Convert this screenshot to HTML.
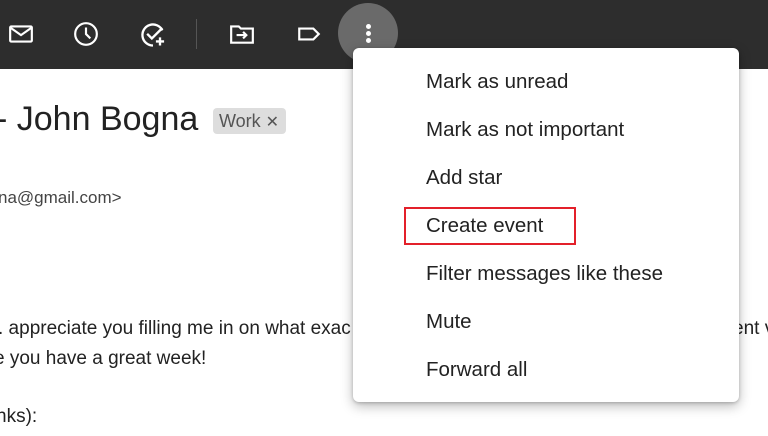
<!DOCTYPE html>
<html><head><meta charset="utf-8"><style>
*{margin:0;padding:0;box-sizing:border-box}
body{width:768px;height:436px;overflow:hidden;background:#fff;font-family:"Liberation Sans",Arial,sans-serif;position:relative;color:#222}
.bar{position:absolute;left:0;top:0;width:768px;height:69px;background:#2d2d2d}
.ic{position:absolute;top:21px}
.div{position:absolute;left:196px;top:19px;width:1px;height:30px;background:#555}
.more{position:absolute;left:338px;top:3px;width:60px;height:60px;border-radius:50%;background:#6a6a6a}
.dot{position:absolute;left:28px;width:5px;height:5px;border-radius:50%;background:#fff}
.t{position:absolute;white-space:nowrap}
.menu{position:absolute;left:353px;top:48px;width:386px;height:354px;background:#fff;border-radius:6px;box-shadow:0 4px 12px rgba(0,0,0,.28),0 1px 3px rgba(0,0,0,.2)}
.mi{position:absolute;left:73px;font-size:20.5px;color:#222;white-space:nowrap;line-height:24px}
.red{position:absolute;left:404px;top:207px;width:172px;height:38px;border:2px solid #e3202a}
</style></head><body>
<div class="bar">
<svg class="ic" style="left:8px" width="26" height="26" viewBox="0 0 24 24" fill="none" stroke="#fff" stroke-width="2"><rect x="2" y="5" width="20" height="14" rx="1"/><path d="M2 6l10 7 10-7"/></svg>
<svg class="ic" style="left:73px" width="26" height="26" viewBox="0 0 24 24" fill="none" stroke="#fff" stroke-width="2"><circle cx="12" cy="12" r="10"/><path d="M12 6v6l4 4"/></svg>
<svg class="ic" style="left:139px" width="28" height="28" viewBox="0 0 24 24" fill="none" stroke="#fff" stroke-width="2"><path d="M20 8A9 9 0 1 0 12 21"/><path d="M7 11l4 4 9-9"/><path d="M18 14v7M14.5 17.5h7"/></svg>
<div class="div"></div>
<svg class="ic" style="left:229px" width="26" height="26" viewBox="0 0 24 24" fill="none" stroke="#fff" stroke-width="2"><path d="M2 5h7l2 2h11v13H2z"/><path d="M7 13h9M13 10l3 3-3 3"/></svg>
<svg class="ic" style="left:296px" width="26" height="26" viewBox="0 0 24 24" fill="none" stroke="#fff" stroke-width="2"><path d="M3 7h13l5 5-5 5H3z"/></svg>
<div class="more"><div class="dot" style="top:21px"></div><div class="dot" style="top:28px"></div><div class="dot" style="top:35px"></div></div>
</div>
<div class="t" style="left:-4px;top:100px;font-size:34px;color:#222">- John Bogna</div>
<div class="t" style="left:213px;top:108px;height:26px;width:73px;background:#ddd;border-radius:4px;font-size:18px;color:#555;padding:3px 0 0 6px">Work <span style="font-size:16px">✕</span></div>
<div class="t" style="left:-2px;top:188px;font-size:17px;color:#444">na@gmail.com&gt;</div>
<div class="t" style="left:-2px;top:318px;font-size:19px">. appreciate you filling me in on what exac</div>
<div class="t" style="left:-6px;top:348px;font-size:19px">e you have a great week!</div>
<div class="t" style="left:-4px;top:406px;font-size:19px">nks):</div>
<div class="t" style="left:733px;top:318px;font-size:19px">ent v</div>
<div class="menu">
<div class="mi" style="top:22px">Mark as unread</div>
<div class="mi" style="top:70px">Mark as not important</div>
<div class="mi" style="top:118px">Add star</div>
<div class="mi" style="top:166px">Create event</div>
<div class="mi" style="top:214px">Filter messages like these</div>
<div class="mi" style="top:262px">Mute</div>
<div class="mi" style="top:310px">Forward all</div>
</div>
<div class="red"></div>
</body></html>
